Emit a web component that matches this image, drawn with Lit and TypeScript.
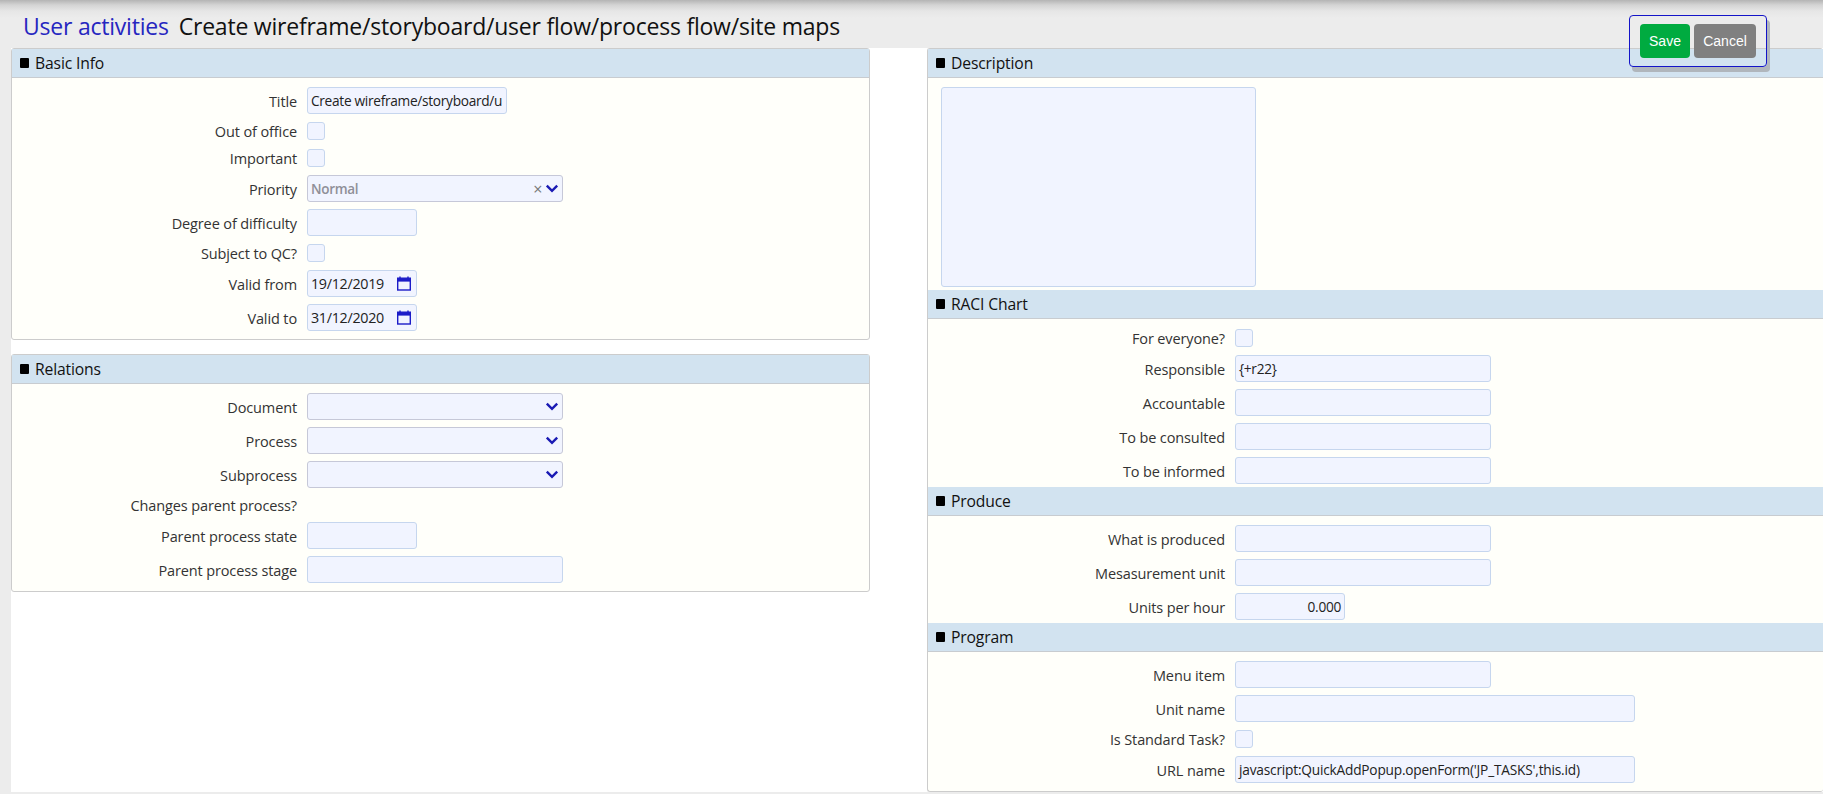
import { LitElement, html, css, svg } from "lit";
import { customElement } from "lit/decorators.js";

type Row = { label: string; kind: string; value?: string };

const chevron = svg`<svg class="chev" width="14" height="9" viewBox="0 0 14 9"><path d="M1.8 1.6 7 6.8l5.2-5.2" fill="none" stroke="#1a1ab4" stroke-width="2.4"/></svg>`;
const calendar = svg`<svg class="cal" width="14" height="15" viewBox="0 0 14 15"><path d="M3 0.5v2.5M11 0.5v2.5" stroke="#1c1cc8" stroke-width="1.4"/><rect x="0.7" y="2.2" width="12.6" height="11.8" fill="none" stroke="#1c1cc8" stroke-width="1.4"/><rect x="0.7" y="2.2" width="12.6" height="3.4" fill="#1c1cc8"/></svg>`;

const basic: Row[] = [
  { label: "Title", kind: "title", value: "Create wireframe/storyboard/u" },
  { label: "Out of office", kind: "check" },
  { label: "Important", kind: "check" },
  { label: "Priority", kind: "priority", value: "Normal" },
  { label: "Degree of difficulty", kind: "short" },
  { label: "Subject to QC?", kind: "check" },
  { label: "Valid from", kind: "date", value: "19/12/2019" },
  { label: "Valid to", kind: "date", value: "31/12/2020" },
];
const relations: Row[] = [
  { label: "Document", kind: "select" },
  { label: "Process", kind: "select" },
  { label: "Subprocess", kind: "select" },
  { label: "Changes parent process?", kind: "none" },
  { label: "Parent process state", kind: "short" },
  { label: "Parent process stage", kind: "medium" },
];
const raci: Row[] = [
  { label: "For everyone?", kind: "check" },
  { label: "Responsible", kind: "medium", value: "{+r22}" },
  { label: "Accountable", kind: "medium" },
  { label: "To be consulted", kind: "medium" },
  { label: "To be informed", kind: "medium" },
];
const produce: Row[] = [
  { label: "What is produced", kind: "medium" },
  { label: "Mesasurement unit", kind: "medium" },
  { label: "Units per hour", kind: "number", value: "0.000" },
];
const program: Row[] = [
  { label: "Menu item", kind: "medium" },
  { label: "Unit name", kind: "wide" },
  { label: "Is Standard Task?", kind: "check" },
  { label: "URL name", kind: "wide url", value: "javascript:QuickAddPopup.openForm('JP_TASKS',this.id)" },
];

@customElement("app-root")
export class AppRoot extends LitElement {
  static styles = css`
    :host { display: block; height: 794px; overflow: hidden; position: relative; background: #ececec; color: #333; font-family: "Open Sans", "Noto Sans", sans-serif; font-size: 14.5px; letter-spacing: -0.12px; }
    .topbar { height: 48px; background: linear-gradient(#b4b4b4 0, #d4d4d4 5px, #e6e6e6 11px, #ececec 18px); display: flex; align-items: flex-start; padding: 12px 0 0 23px; box-sizing: border-box; font-size: 23px; line-height: 28px; gap: 10px; color: #111; letter-spacing: -0.22px; }
    .crumb { color: #2626c0; }
    .main { margin-left: 11px; height: 744px; background: #fff; display: flex; gap: 57px; align-items: flex-start; }
    .left { width: 859px; display: flex; flex-direction: column; gap: 14px; }
    .right { flex: 1; min-width: 0; }
    .card { border: 1px solid #ccc; border-radius: 3px; background: #fffffa; box-sizing: border-box; }
    .right.card { height: 744px; border-right: 0; }
    .head { height: 29px; box-sizing: border-box; background: #d2e3f0; border-bottom: 1px solid #c8ccd0; display: flex; align-items: center; padding-left: 8px; gap: 6px; color: #111; font-size: 15.7px; font-weight: 500; letter-spacing: -0.15px; }
    .bullet { width: 9px; height: 10px; background: #000; border-radius: 1px; }
    .rows { display: flex; flex-direction: column; gap: 7px; padding: 9px 0 8px; }
    .rows.tight { padding-bottom: 3px; }
    .row { display: grid; grid-template-columns: 285px 1fr; column-gap: 10px; align-items: center; min-height: 20px; }
    .right .row { grid-template-columns: 297px 1fr; }
    .label { text-align: right; box-sizing: border-box; height: 20px; padding-top: 2px; line-height: 18px; }
    .field { height: 27px; box-sizing: border-box; background: #f1f4ff; border: 1px solid #c6d6ee; border-radius: 3px; display: flex; align-items: center; padding: 0 3px; color: #222; font-size: 13.7px; letter-spacing: -0.3px; white-space: nowrap; overflow: hidden; }
    .title { width: 200px; }
    .short, .date, .number { width: 110px; }
    .medium, .select, .priority { width: 256px; }
    .wide { width: 400px; }
    .url { letter-spacing: -0.2px; }
    .number { justify-content: flex-end; padding-right: 3px; }
    .date { justify-content: space-between; padding-right: 5px; font-size: 14.3px; }
    .select, .priority { border-color: #c6c8d8; justify-content: flex-end; padding-right: 3px; }
    .priority .val { margin-right: auto; color: #8f8f98; font-weight: 600; font-size: 13.5px; }
    .priority .clear { color: #777; font-size: 16px; margin-right: 3px; line-height: 1; }
    .check { width: 18px; height: 18px; box-sizing: border-box; background: #f1f4ff; border: 1px solid #c6d6ee; border-radius: 3px; }
    .chev, .cal { flex: none; }
    .desc { padding: 9px 0 3px 13px; }
    .area { width: 315px; height: 200px; box-sizing: border-box; background: #f1f4ff; border: 1px solid #c6d6ee; border-radius: 3px; }
    .actions { position: absolute; left: 1629px; top: 15px; width: 138px; height: 52px; box-sizing: border-box; border: 1px solid #1414c8; border-radius: 4px; box-shadow: 3px 5px 0 #b0b6bc; display: flex; gap: 4px; padding: 8px 0 0 10px; background: transparent; }
    .btn { height: 34px; border-radius: 4px; color: #fff; font-family: "Liberation Sans", Arial, sans-serif; font-size: 14px; letter-spacing: 0; display: flex; align-items: center; justify-content: center; }
    .save { width: 50px; background: #00ab40; }
    .cancel { width: 62px; background: #808080; }
  `;

  private field(r: Row) {
    switch (r.kind) {
      case "none": return html`<span></span>`;
      case "check": return html`<div class="check"></div>`;
      case "select": return html`<div class="field select">${chevron}</div>`;
      case "priority": return html`<div class="field priority"><span class="val">${r.value}</span><span class="clear">×</span>${chevron}</div>`;
      case "date": return html`<div class="field date"><span>${r.value}</span>${calendar}</div>`;
      default: return html`<div class="field ${r.kind}">${r.value ?? ""}</div>`;
    }
  }

  private rows(items: Row[], tight = false) {
    return html`<div class="rows ${tight ? "tight" : ""}">
      ${items.map((r) => html`<div class="row"><div class="label">${r.label}</div>${this.field(r)}</div>`)}
    </div>`;
  }

  private head(t: string) {
    return html`<div class="head"><span class="bullet"></span><span>${t}</span></div>`;
  }

  render() {
    return html`
      <div class="topbar"><span class="crumb">User activities</span><span>Create wireframe/storyboard/user flow/process flow/site maps</span></div>
      <div class="main">
        <div class="left">
          <section class="card">${this.head("Basic Info")}${this.rows(basic)}</section>
          <section class="card">${this.head("Relations")}${this.rows(relations)}</section>
        </div>
        <div class="right card">
          ${this.head("Description")}
          <div class="desc"><div class="area"></div></div>
          ${this.head("RACI Chart")}${this.rows(raci, true)}
          ${this.head("Produce")}${this.rows(produce, true)}
          ${this.head("Program")}${this.rows(program, true)}
        </div>
      </div>
      <div class="actions"><div class="btn save">Save</div><div class="btn cancel">Cancel</div></div>
    `;
  }
}
